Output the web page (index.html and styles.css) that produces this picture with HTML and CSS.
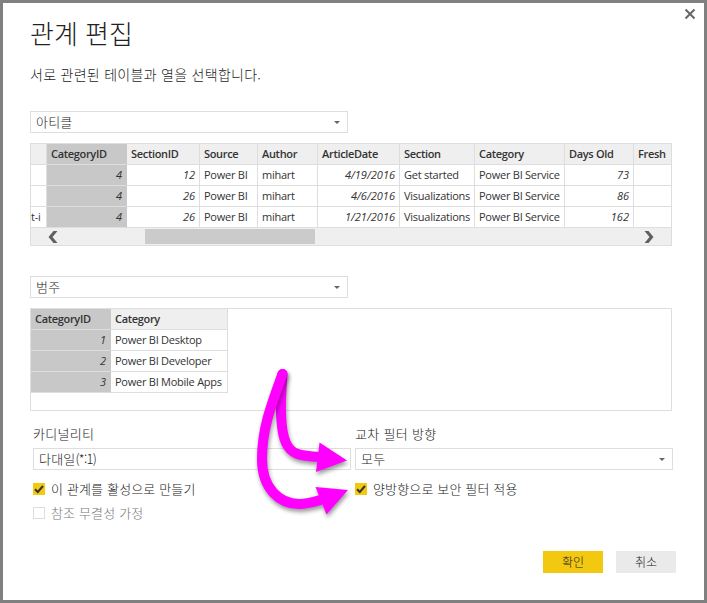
FILE: index.html
```html
<!DOCTYPE html>
<html lang="ko">
<head>
<meta charset="utf-8">
<title>관계 편집</title>
<link rel="stylesheet" href="styles.css">
</head>
<body>
<main class="dialog">
  <button class="close" aria-label="닫기"><svg width="12" height="12" viewBox="0 0 12 12"><path d="M1.5 1.5 10.5 10.5M10.5 1.5 1.5 10.5"/></svg></button>
  <h1>관계 편집</h1>
  <p class="intro">서로 관련된 테이블과 열을 선택합니다.</p>

  <div class="select"><span>아티클</span><i class="caret"></i></div>
  <section class="preview">
    <table class="articles">
      <colgroup><col class="w16"><col class="w80"><col class="w73"><col class="w58"><col class="w60"><col class="w82"><col class="w75"><col class="w90"><col class="w69"><col class="w38"></colgroup>
      <tr><th></th><th class="key">CategoryID</th><th>SectionID</th><th>Source</th><th>Author</th><th>ArticleDate</th><th>Section</th><th>Category</th><th>Days Old</th><th>Fresh</th></tr>
      <tr><td></td><td class="key num">4</td><td class="num">12</td><td>Power BI</td><td>mihart</td><td class="num">4/19/2016</td><td>Get started</td><td>Power BI Service</td><td class="num">73</td><td></td></tr>
      <tr><td></td><td class="key num">4</td><td class="num">26</td><td>Power BI</td><td>mihart</td><td class="num">4/6/2016</td><td>Visualizations</td><td>Power BI Service</td><td class="num">86</td><td></td></tr>
      <tr><td class="cut">t-i</td><td class="key num">4</td><td class="num">26</td><td>Power BI</td><td>mihart</td><td class="num">1/21/2016</td><td>Visualizations</td><td>Power BI Service</td><td class="num">162</td><td></td></tr>
    </table>
    <div class="scrollbar">
      <svg width="10" height="12" viewBox="0 0 10 12"><path d="M5.5 0H9.5L4.500 6L9.500 12H5.500L0.500 6Z"/></svg>
      <div class="track"><div class="thumb"></div></div>
      <svg width="10" height="12" viewBox="0 0 10 12"><path d="M0.500 0H4.500L9.500 6L4.500 12H0.500L5.500 6Z"/></svg>
    </div>
  </section>

  <div class="select"><span>범주</span><i class="caret"></i></div>
  <section class="preview categories-box">
    <table class="categories">
      <colgroup><col class="w80"><col class="w117"></colgroup>
      <tr><th class="key">CategoryID</th><th>Category</th></tr>
      <tr><td class="key num">1</td><td>Power BI Desktop</td></tr>
      <tr><td class="key num">2</td><td>Power BI Developer</td></tr>
      <tr><td class="key num">3</td><td>Power BI Mobile Apps</td></tr>
    </table>
  </section>

  <div class="options">
    <div class="option">
      <label class="caption">카디널리티</label>
      <div class="select"><span>다대일<span class="ratio">(*:1)</span></span><i class="caret"></i></div>
      <div class="check on"><i><svg width="12" height="12" viewBox="0 0 12 12"><path d="M2 6.2 4.800 9 10 3"/></svg></i><span>이 관계를 활성으로 만들기</span></div>
      <div class="check off"><i></i><span>참조 무결성 가정</span></div>
    </div>
    <div class="option">
      <label class="caption">교차 필터 방향</label>
      <div class="select"><span>모두</span><i class="caret"></i></div>
      <div class="check on"><i><svg width="12" height="12" viewBox="0 0 12 12"><path d="M2 6.200 4.800 9 10 3"/></svg></i><span>양방향으로 보안 필터 적용</span></div>
    </div>
  </div>

  <footer><button class="ok">확인</button><button class="cancel">취소</button></footer>

  <svg class="arrows" width="130" height="170" viewBox="240 360 130 170">
    <g class="arrow"><path class="line" d="M282.500 374C280 404 280 430 286 443C291 454 299 456 320 457"/><path class="head" d="M347 460.500 319.500 442.500 316 472Z"/></g>
    <g class="arrow"><path class="line" d="M282.500 374C270 408 262 430 262 459C262 489 280 504 299 504C308 504 314 502 322 499.500"/><path class="head" d="M348 490 315.500 487 326.500 514.500Z"/></g>
  </svg>
</main>
</body>
</html>
```

FILE: styles.css
```css
* { box-sizing: border-box; }
body { margin: 0; font-family: "Noto Sans CJK KR", sans-serif; font-size: 13px; color: #222; background: #fff; }
.dialog { position: relative; width: 707px; height: 603px; border: 3px solid #808080; padding: 11px 0 0 27px; overflow: hidden; }
.close { position: absolute; right: 8px; top: 5px; width: 12px; height: 12px; padding: 0; border: 0; background: none; }
.close svg { display: block; fill: none; stroke: #666; stroke-width: 2; }
h1 { margin: 0; height: 40px; line-height: 38px; font-size: 26px; font-weight: 300; color: #222; white-space: nowrap; }
.intro { margin: 10px 0 0; height: 47px; line-height: 20px; font-size: 14px; font-weight: 300; letter-spacing: .28px; white-space: nowrap; }
.select { display: flex; align-items: center; justify-content: space-between; width: 318px; height: 22px; padding: 0 7px 0 5px; border: 1px solid #dedede; background: #fff; font-size: 13px; font-weight: 300; line-height: 20px; letter-spacing: .2px; white-space: nowrap; }
.caret { border: 3px solid transparent; border-top-color: #666; border-bottom: 0; }
.ratio { letter-spacing: -.7px; }
.preview { width: 642px; height: 103px; margin: 10px 0 30px; border: 1px solid #dedede; }
table { border-collapse: separate; border-spacing: 0; table-layout: fixed; font: 11px "Open Sans", sans-serif; letter-spacing: -.25px; color: #333; }
.articles { width: 641px; }
.categories { width: 197px; }
th, td { height: 21px; padding: 0 0 0 4px; border-right: 1px solid #dedede; border-bottom: 1px solid #dedede; line-height: 20px; text-align: left; white-space: nowrap; overflow: hidden; }
th { background: #efefef; font-weight: 600; letter-spacing: -.32px; }
.key { background: #c8c8c8; border-right-color: #c8c8c8; }
.num { padding: 0 4px 0 0; text-align: right; font-style: italic; letter-spacing: 0; }
.cut { padding-left: 0; }
.w16 { width: 16px; } .w80 { width: 80px; } .w73 { width: 73px; } .w58 { width: 58px; } .w60 { width: 60px; } .w82 { width: 82px; } .w75 { width: 75px; } .w90 { width: 90px; } .w69 { width: 69px; } .w38 { width: 38px; } .w117 { width: 117px; }
.scrollbar { display: flex; align-items: center; height: 17px; padding: 0 17px; background: #efefef; }
.scrollbar svg { fill: #606060; }
.track { flex: 1; padding-left: 87px; }
.thumb { width: 170px; height: 15px; background: #cbcbcb; }
.categories-box { margin-bottom: 0; }
.options { display: flex; gap: 4px; margin: 13px 0 0 3px; height: 114px; }
.option { width: 318px; font-weight: 300; letter-spacing: .15px; }
.caption { display: block; height: 24px; line-height: 20px; font-size: 13px; letter-spacing: .3px; }
.check { display: flex; align-items: center; height: 24px; margin-top: 7px; font-size: 13px; line-height: 20px; white-space: nowrap; }
.check i { width: 12px; height: 12px; margin-right: 6px; }
.on i { background: #f2c811; }
.check svg { display: block; fill: none; stroke: #333; stroke-width: 2; }
.off { margin-top: 0; color: #777; }
.off i { border: 1px solid #dedede; }
footer { display: flex; gap: 13px; margin: 13px 0 0 513px; }
footer button { width: 60px; height: 22px; padding: 0; border: 0; font: 300 12px/20px "Noto Sans CJK KR", sans-serif; color: #222; }
.ok { background: #f2c811; }
.cancel { background: #eaeaea; }
.arrows { position: absolute; left: 237px; top: 357px; }
.arrow { filter: drop-shadow(1px 3px 2px rgba(0, 0, 0, .4)); }
.line { fill: none; stroke: #f0f; stroke-width: 10; stroke-linecap: round; }
.head { fill: #f0f; }
```
